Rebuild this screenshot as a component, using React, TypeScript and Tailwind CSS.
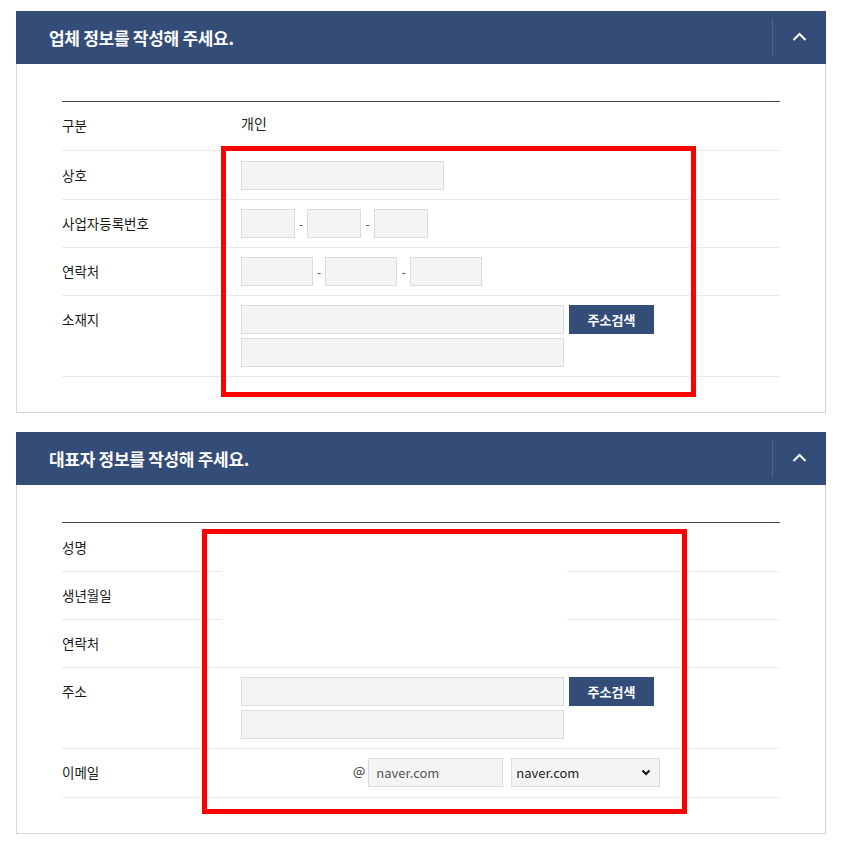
import React from 'react'

const font = { fontFamily: '"Noto Sans CJK KR", "Noto Sans", sans-serif' }

function Chevron() {
  return (
    <svg width="15" height="9" viewBox="0 0 15 9" fill="none">
      <path d="M1.5 8 L7.5 2 L13.5 8" stroke="#ffffff" strokeWidth="2" />
    </svg>
  )
}

function Panel({ title, children }: { title: string; children: React.ReactNode }) {
  return (
    <div className="w-[810px]">
      <div className="flex h-[53px] items-center justify-between bg-[#344c78] pl-[33px]">
        <h2 className="text-[17px] font-bold tracking-[-0.3px] text-white">{title}</h2>
        <div className="flex h-full items-center">
          <div className="h-[37px] w-px bg-[#4b6190]" />
          <div className="flex w-[53px] items-center justify-center pb-[2px]">
            <Chevron />
          </div>
        </div>
      </div>
      <div className="border border-t-0 border-[#d6d6d6] px-[45px] pt-[37px] pb-[35px]">
        <div className="border-t border-[#3c4858]">{children}</div>
      </div>
    </div>
  )
}

function Row({
  label,
  h,
  pt,
  children,
}: {
  label: string
  h: string
  pt: string
  children?: React.ReactNode
}) {
  return (
    <div className={`flex items-start border-b border-[#ebebeb] ${h} ${pt}`}>
      <div className="flex h-[29px] w-[179px] shrink-0 items-center text-[13.5px] text-[#1a1a1a]">
        {label}
      </div>
      <div className="flex-1">{children}</div>
    </div>
  )
}

function Input({ w }: { w: string }) {
  return <div className={`h-[29px] border border-[#dcdcdc] bg-[#f4f4f4] ${w}`} />
}

function Dash() {
  return <span className="w-[12px] text-center text-[12px] text-[#444]">-</span>
}

function Address() {
  return (
    <div className="flex flex-col gap-[4px]">
      <div className="flex gap-[5px]">
        <Input w="w-[323px]" />
        <button className="flex h-[29px] w-[85px] items-center justify-center bg-[#344c78] text-[13px] font-bold text-white">
          주소검색
        </button>
      </div>
      <Input w="w-[323px]" />
    </div>
  )
}

export default function App() {
  return (
    <div className="relative min-h-[849px] w-[848px] bg-white pt-[11px] pl-[16px]" style={font}>
      <Panel title="업체 정보를 작성해 주세요.">
        <Row label="구분" h="h-[49px]" pt="pt-[9px]">
          <div className="flex h-[25px] items-center text-[14px] text-[#222]">개인</div>
        </Row>
        <Row label="상호" h="h-[49px]" pt="pt-[10px]">
          <Input w="w-[203px]" />
        </Row>
        <Row label="사업자등록번호" h="h-[48px]" pt="pt-[9px]">
          <div className="flex items-center">
            <Input w="w-[54px]" />
            <Dash />
            <Input w="w-[54px]" />
            <span className="w-[13px] text-center text-[12px] text-[#444]">-</span>
            <Input w="w-[54px]" />
          </div>
        </Row>
        <Row label="연락처" h="h-[48px]" pt="pt-[9px]">
          <div className="flex items-center">
            <Input w="w-[72px]" />
            <span className="w-[12px] text-center text-[12px] text-[#444]">-</span>
            <Input w="w-[72px]" />
            <span className="w-[13px] text-center text-[12px] text-[#444]">-</span>
            <Input w="w-[72px]" />
          </div>
        </Row>
        <Row label="소재지" h="h-[81px]" pt="pt-[9px]">
          <Address />
        </Row>
      </Panel>

      <div className="h-[19px]" />

      <Panel title="대표자 정보를 작성해 주세요.">
        <Row label="성명" h="h-[49px]" pt="pt-[10px]" />
        <Row label="생년월일" h="h-[48px]" pt="pt-[9px]" />
        <Row label="연락처" h="h-[48px]" pt="pt-[9px]" />
        <Row label="주소" h="h-[81px]" pt="pt-[9px]">
          <Address />
        </Row>
        <Row label="이메일" h="h-[49px]" pt="pt-[9px]">
          <div className="flex items-center">
            <div className="w-[112px]" />
            <span className="mr-[3px] -mt-[4px] text-[13px] text-[#333]">@</span>
            <div className="flex h-[29px] w-[135px] items-center border border-[#dcdcdc] bg-[#f4f4f4] pl-[7px] text-[13px] text-[#555]">
              naver.com
            </div>
            <div className="ml-[8px] flex h-[29px] w-[149px] items-center justify-between border border-[#dcdcdc] bg-[#f4f4f4] pr-[8px] pl-[4px] text-[13px] text-[#222]">
              <span>naver.com</span>
              <svg width="10" height="7" viewBox="0 0 10 7" fill="none">
                <path d="M1.5 1.5 L5 5 L8.5 1.5" stroke="#111" strokeWidth="2" />
              </svg>
            </div>
          </div>
        </Row>
      </Panel>

      {/* redacted area in second panel */}
      <div className="absolute left-[222px] top-[523px] h-[142px] w-[345px] bg-white" />

      {/* red annotation boxes */}
      <div className="pointer-events-none absolute left-[221px] top-[146px] h-[251px] w-[475px] border-[5px] border-[#ff0000]" />
      <div className="pointer-events-none absolute left-[202px] top-[529px] h-[285px] w-[485px] border-[5px] border-[#ff0000]" />
    </div>
  )
}
